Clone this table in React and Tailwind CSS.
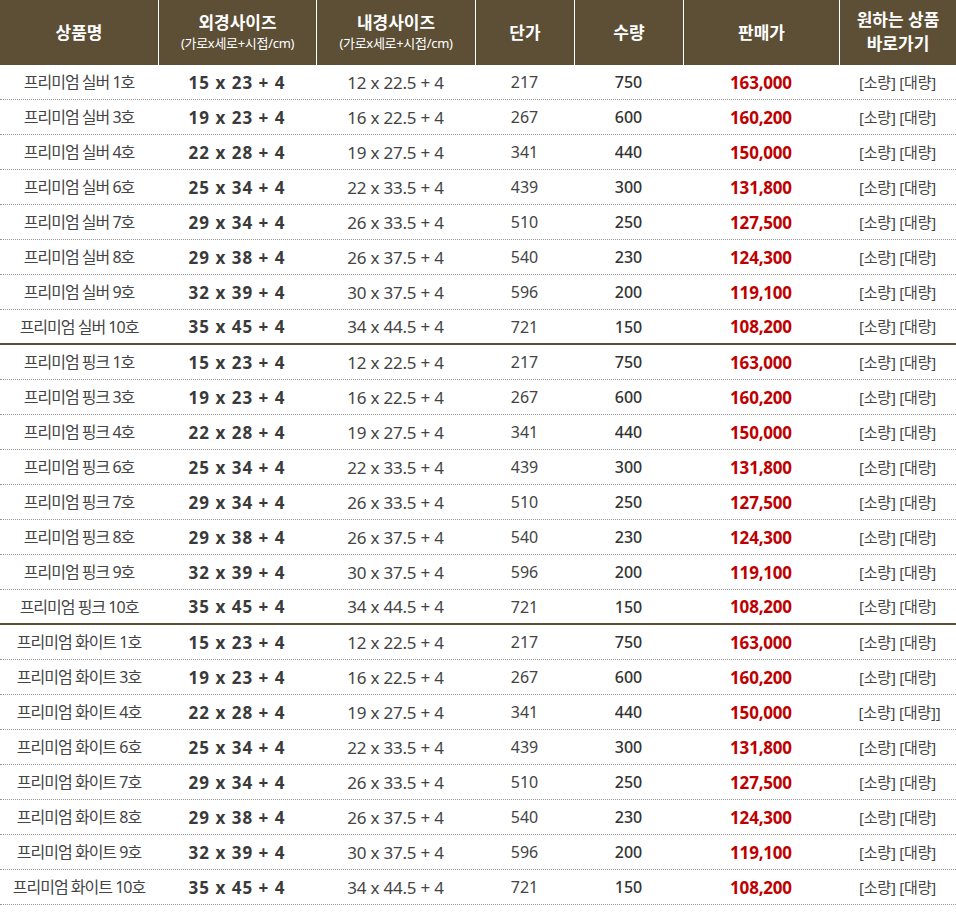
const sizes = [
  { no: 1, outer: "15 x 23 + 4", inner: "12 x 22.5 + 4", unit: 217, qty: 750, price: "163,000" },
  { no: 3, outer: "19 x 23 + 4", inner: "16 x 22.5 + 4", unit: 267, qty: 600, price: "160,200" },
  { no: 4, outer: "22 x 28 + 4", inner: "19 x 27.5 + 4", unit: 341, qty: 440, price: "150,000" },
  { no: 6, outer: "25 x 34 + 4", inner: "22 x 33.5 + 4", unit: 439, qty: 300, price: "131,800" },
  { no: 7, outer: "29 x 34 + 4", inner: "26 x 33.5 + 4", unit: 510, qty: 250, price: "127,500" },
  { no: 8, outer: "29 x 38 + 4", inner: "26 x 37.5 + 4", unit: 540, qty: 230, price: "124,300" },
  { no: 9, outer: "32 x 39 + 4", inner: "30 x 37.5 + 4", unit: 596, qty: 200, price: "119,100" },
  { no: 10, outer: "35 x 45 + 4", inner: "34 x 44.5 + 4", unit: 721, qty: 150, price: "108,200" },
];

const groups = ["실버", "핑크", "화이트"];

const font = { fontFamily: '"Noto Sans", "Noto Sans CJK KR", sans-serif' };

function Row({ group, item, last }) {
  const link = group === "화이트" && item.no === 4 ? "[소량] [대량]]" : "[소량] [대량]";
  return (
    <div
      className={
        "grid grid-cols-[158px_158px_159px_99px_109px_156px_117px] h-[35px] items-center text-center " +
        (last ? "border-b-[2px] border-[#5c4f36]" : "border-b border-dotted border-[#9a9a9a]")
      }
    >
      <div className="text-[16px] text-[#444] tracking-[-1px]">
        프리미엄 {group} {item.no}호
      </div>
      <div className="text-[17px] font-bold text-[#3a3a3a] tracking-[1px]">{item.outer}</div>
      <div className="text-[17px] text-[#444] tracking-[-0.2px]">{item.inner}</div>
      <div className="text-[16px] text-[#444]">{item.unit}</div>
      <div className="text-[16px] font-medium text-[#333]">{item.qty}</div>
      <div className="text-[17px] font-bold text-[#c00000] tracking-[-0.2px]">{item.price}</div>
      <div className={"text-[15px] text-[#444] tracking-[-0.2px] " + (link.length > 9 ? "pl-[4px]" : "")}>{link}</div>
    </div>
  );
}

export default function App() {
  return (
    <div className="w-[956px] bg-white leading-none" style={font}>
      <div className="grid grid-cols-[158px_158px_159px_99px_109px_156px_117px] h-[65px] bg-[#5c4f36] text-white">
        <div className="flex items-center justify-center text-[17px] font-bold">상품명</div>
        <div className="flex flex-col items-center justify-center border-l border-white gap-[6px] pb-[2px]">
          <span className="text-[17px] font-bold">외경사이즈</span>
          <span className="text-[13px] tracking-[-0.3px]">(가로x세로+시접/cm)</span>
        </div>
        <div className="flex flex-col items-center justify-center border-l border-white gap-[6px] pb-[2px]">
          <span className="text-[17px] font-bold">내경사이즈</span>
          <span className="text-[13px] tracking-[-0.3px]">(가로x세로+시접/cm)</span>
        </div>
        <div className="flex items-center justify-center border-l border-white text-[17px] font-bold">단가</div>
        <div className="flex items-center justify-center border-l border-white text-[17px] font-bold">수량</div>
        <div className="flex items-center justify-center border-l border-white text-[17px] font-bold">판매가</div>
        <div className="flex flex-col items-center justify-center border-l border-white gap-[7px] pb-[2px] text-[17px] font-bold">
          <span>원하는 상품</span>
          <span>바로가기</span>
        </div>
      </div>
      {groups.map((g, gi) =>
        sizes.map((s, i) => (
          <Row key={g + s.no} group={g} item={s} last={i === sizes.length - 1 && gi < groups.length - 1} />
        ))
      )}
    </div>
  );
}
